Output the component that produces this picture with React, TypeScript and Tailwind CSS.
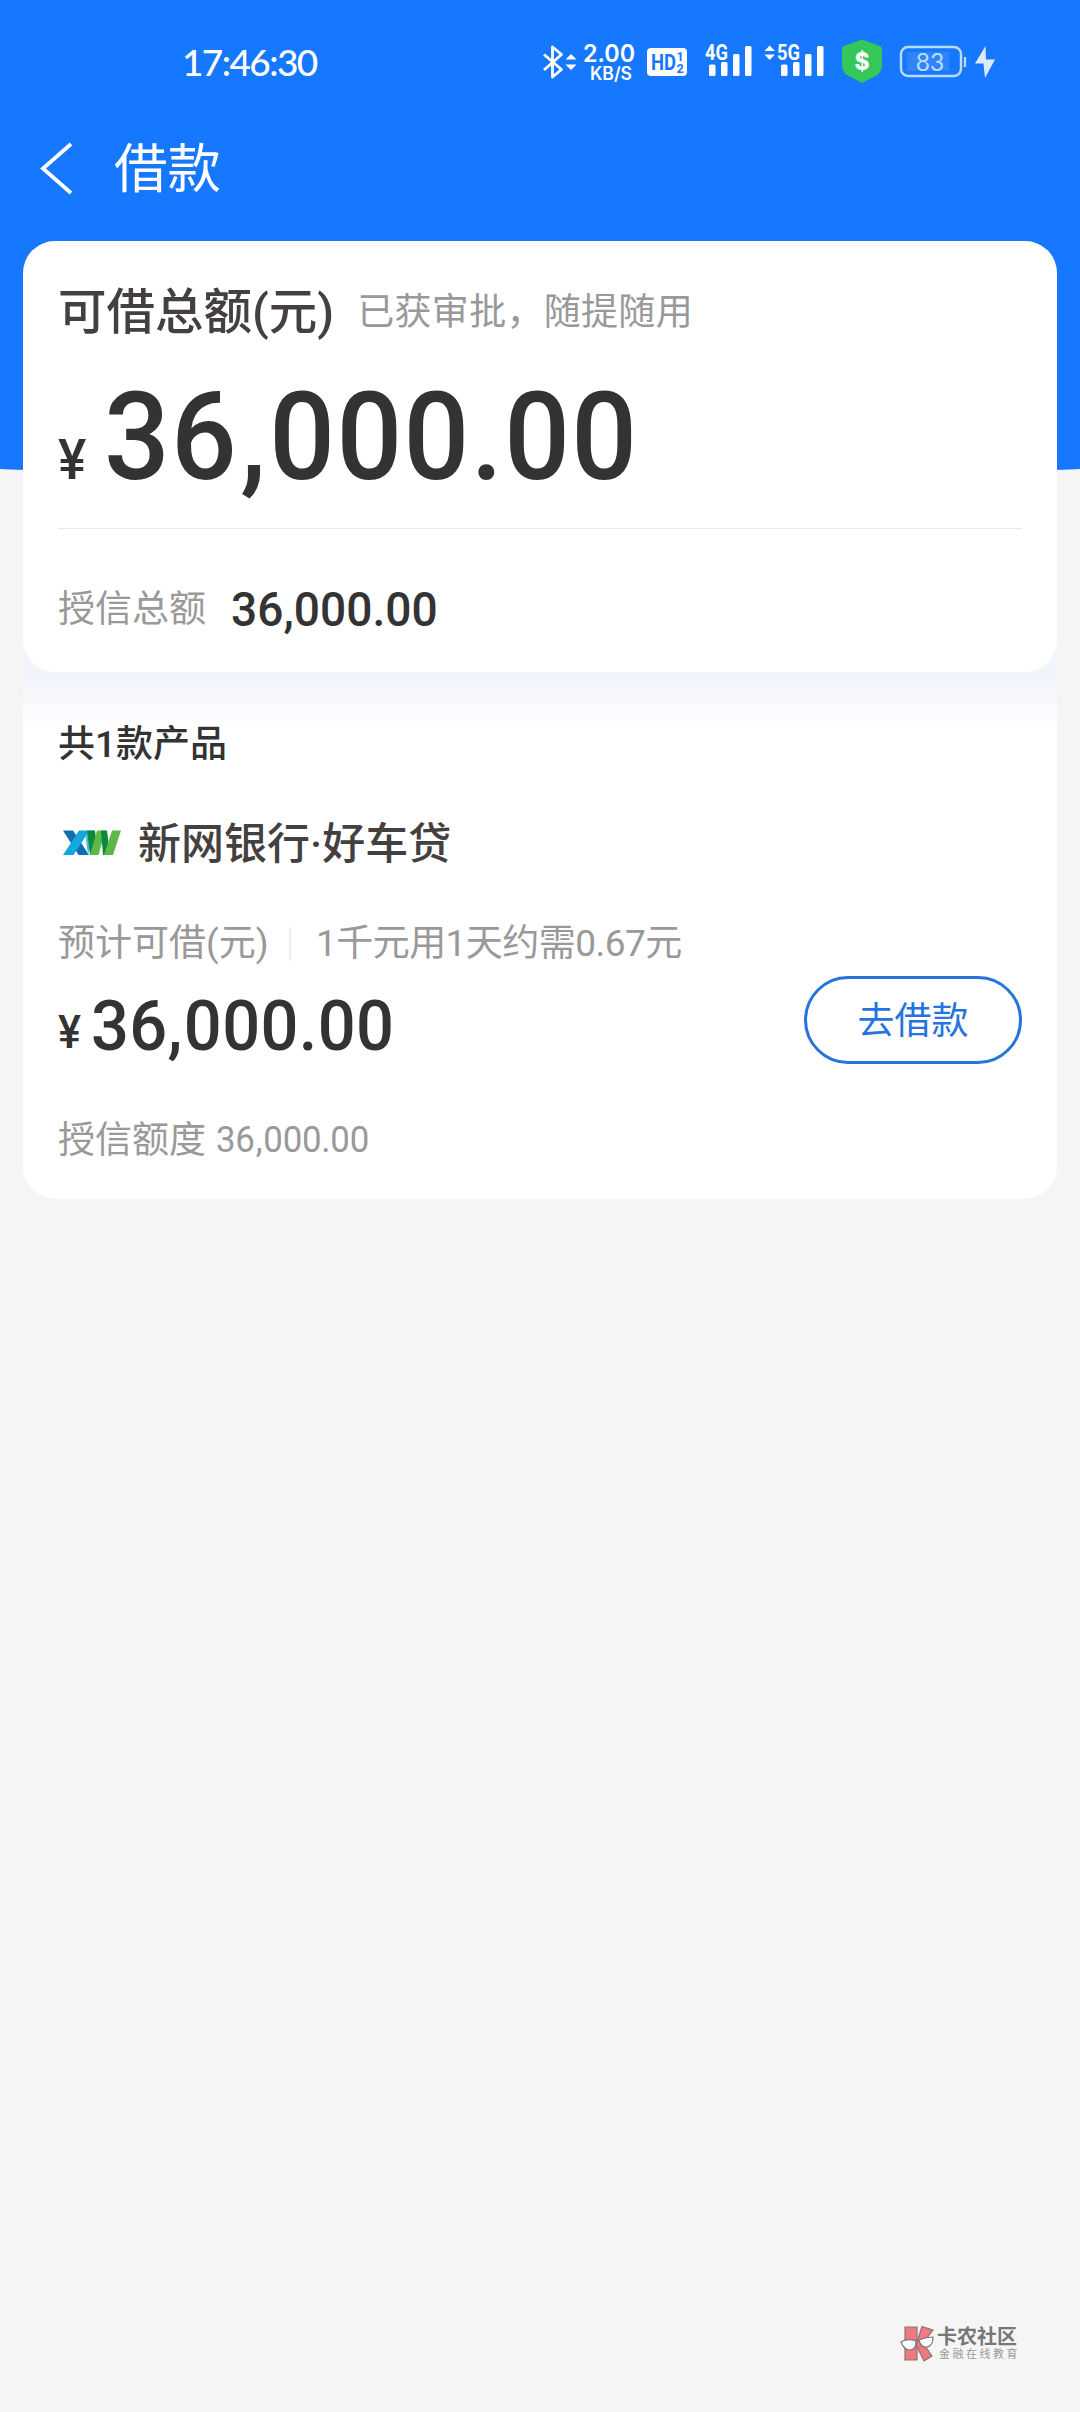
import React from "react";

const CJK = "font-['Roboto','Noto_Sans_CJK_SC',sans-serif]";

function Digits({ text, className, comma }: { text: string; className: string; comma: string }) {
  const [head, tail] = text.split(",");
  return (
    <span className={`inline-block origin-left scale-x-[0.94] whitespace-nowrap ${className}`}>
      {head}
      <span className={comma}>,</span>
      {tail}
    </span>
  );
}

function Signal({ label, arrows }: { label: string; arrows?: boolean }) {
  return (
    <svg className="shrink-0" width={62} height={48} viewBox="0 0.5 62 48" fill="#fff">
      {arrows && <path d="M1.500 13.500 6.700 8l5.200 5.500zM1.500 17 6.700 22.500 11.900 17z" />}
      <text x={14} y={22.500} fontFamily="Roboto" fontWeight={700} fontSize={21.500} textLength={23} lengthAdjust="spacingAndGlyphs">
        {label}
      </text>
      <rect x={18} y={27} width={6.500} height={11.500} rx={1.500} />
      <rect x={30} y={24.500} width={6.500} height={14} rx={1.500} />
      <rect x={42} y={16.500} width={6.500} height={22} rx={1.500} />
      <rect x={54} y={8.500} width={6.500} height={30} rx={1.500} />
    </svg>
  );
}

function StatusBar() {
  return (
    <div className="flex h-[124px] shrink-0 items-center text-white">
      <span className="mb-[2px] ml-[182px] w-[359px] font-['Lato',sans-serif] text-[37px] leading-none font-medium tracking-[-1.6px]">17:46:30</span>
      <svg className="mb-[2px] shrink-0" width={38} height={40} viewBox="0 0 38 40" fill="none" stroke="#fff">
        <path d="M3 13.500 20.500 28.500 11.500 36V6L20.500 13.500 3 29" strokeWidth={2.800} strokeLinejoin="round" />
        <path d="M24.500 18.500 30 13l5.500 5.500zM24.500 23.500 30 29l5.500-5.500z" fill="#fff" stroke="none" />
      </svg>
      <svg className="shrink-0" width={60} height={48} viewBox="0 -2 60 48" fill="#fff" fontFamily="Inter" fontWeight={600}>
        <text x={4} y={22} fontSize={24} textLength={52} lengthAdjust="spacingAndGlyphs">2.00</text>
        <text x={11} y={39.500} fontSize={18} textLength={42} lengthAdjust="spacingAndGlyphs">KB/S</text>
      </svg>
      <svg className="ml-[8px] shrink-0" width={40} height={28} viewBox="0 0 40 28">
        <rect width={40} height={28} rx={4} fill="#fff" />
        <g fill="#1677ff" fontFamily="Roboto" fontWeight={700}>
          <text x={4} y={21.500} fontSize={21.500} textLength={25} lengthAdjust="spacingAndGlyphs">HD</text>
          <text x={29.500} y={13} fontSize={12.500}>1</text>
          <text x={29.500} y={25} fontSize={12.500}>2</text>
        </g>
      </svg>
      <div className="ml-[4px] flex">
        <Signal label="4G" />
        <div className="ml-[10px] flex">
          <Signal label="5G" arrows />
        </div>
      </div>
      <svg className="mb-[3px] ml-[17px] shrink-0" width={40} height={44} viewBox="0 0 40 44">
        <path d="M20 .5 38 7q2 .7 2 3v16q0 7-5.500 10.500L20 44 5.500 36.500Q0 33 0 26V10q0-2.300 2-3z" fill="#34c759" />
        <text x={20} y={30.500} fontFamily="Inter" fontWeight={800} fontSize={24} fill="#fff" textAnchor="middle" textLength={15} lengthAdjust="spacingAndGlyphs">$</text>
      </svg>
      <svg className="ml-[17px] shrink-0" width={98} height={34} viewBox="0 0 98 34" fill="none">
        <rect x={2} y={2} width={60} height={29} rx={7} stroke="#b9dcff" strokeWidth={2.400} />
        <rect x={8} y={7} width={42} height={19} fill="#3083ff" />
        <path d="M66 12v10" stroke="#b9dcff" strokeWidth={2.200} />
        <text x={31} y={25.500} fontFamily="Lato" fontSize={24.500} fill="#b9dcff" textAnchor="middle">83</text>
        <path d="M86.500 1 76 18.500h8.500L86 33l10-18.500h-9z" fill="#dcebff" />
      </svg>
    </div>
  );
}

function BankLogo() {
  return (
    <svg className="shrink-0" width={58} height={26} viewBox="0 0 58 26">
      <path d="M0 .5h10L26 25H15.500z" fill="#0f6fae" />
      <path d="M16 .5h10.500L10.500 25H0z" fill="#14a7df" />
      <path d="M22.500 6 27 .5h4L25 25z" fill="#41c0ec" />
      <path d="M24 .5h8L35 25h-8z" fill="#0b8a3a" />
      <path d="M34 .5h8.500L35.500 25H27z" fill="#5cb947" />
      <path d="M38 .5h6L47 25h-7z" fill="#0b8a3a" />
      <path d="M49 .5h9L50 25h-9z" fill="#5cb947" />
    </svg>
  );
}

function Watermark() {
  return (
    <div className="mt-auto mb-[49px] ml-[900px] flex h-[38px] items-start">
      <svg className="shrink-0" width={36} height={38} viewBox="0 0 36 38">
        <g fill="#ee7a80" stroke="#8d7275" strokeWidth={1.200}>
          <path d="M5 2h12v33H5z" />
          <path d="M22 1.500 33 5 23 18l9 13-8 5-8-16z" />
        </g>
        <g fill="#fff" stroke="#777" strokeWidth={1.200}>
          <path d="M1 17q7-4 15-1 0 9-6 9T1 17z" />
          <path d="M19 15q7-3 14-3 0 9-6 10t-8-7z" />
        </g>
      </svg>
      <div className="ml-[1px] flex flex-col">
        <span className="h-[22px] text-[20px] leading-[24px] font-bold text-[#777]">卡农社区</span>
        <span className="pl-[2px] text-[11px] leading-[16px] tracking-[2.500px] whitespace-nowrap text-[#999]">金融在线教育</span>
      </div>
    </div>
  );
}

export default function App() {
  return (
    <div className={`relative flex h-[2412px] w-[1080px] flex-col overflow-hidden bg-[#f5f5f5] ${CJK}`}>
      <div className="absolute top-0 -left-[60px] h-[477px] w-[1200px] rounded-b-[50%_14px] bg-[#1677ff]" />
      <div className="relative flex grow flex-col">
        <StatusBar />
        <header className="flex h-[117px] shrink-0 items-start text-white">
          <svg className="mt-[18px] ml-[40px] shrink-0" width={34} height={54} viewBox="0 0 34 54" fill="none" stroke="#fff" strokeWidth={3.800}>
            <path d="M31 2 3 26.500 31 51" />
          </svg>
          <h1 className="mt-[10px] ml-[40px] text-[53.500px] leading-[72px]">借款</h1>
        </header>

        <div className="mx-[23px] flex h-[463px] shrink-0 flex-col bg-linear-to-b from-transparent from-82% via-[#f1f4fa] via-93% to-[#f7f8fb] to-100%">
          <section className="flex h-[431px] shrink-0 flex-col rounded-[32px] bg-white px-[35px]">
            <div className="mt-[37px] flex h-[70px] items-center">
              <span className="text-[48.500px] leading-[70px] font-medium whitespace-nowrap text-[#444040]">可借总额(元)</span>
              <span className="ml-[23px] text-[37px] leading-[70px] tracking-[0.300px] whitespace-nowrap text-[#999]">已获审批，随提随用</span>
            </div>
            <div className="flex h-[181px] items-baseline border-b border-[#e8e8e8] text-[#333]">
              <span className="w-[46px] origin-left scale-x-[0.95] text-[56px] leading-[181px] font-medium">¥</span>
              <Digits text="36,000.00" className="text-[123px] leading-[178px] font-medium tracking-[1.500px]" comma="ml-[2px] mr-[2px]" />
            </div>
            <div className="mt-[41px] flex h-[80px] items-baseline">
              <span className="relative -top-[4px] w-[173px] text-[37px] leading-[80px] text-[#999]">授信总额</span>
              <Digits text="36,000.00" className="text-[49px] leading-[80px] font-medium tracking-[0.050px] text-[#333]" comma="" />
            </div>
          </section>
        </div>

        <section className="mx-[23px] flex h-[495px] shrink-0 flex-col rounded-b-[32px] bg-linear-to-b from-[#f9fafd] to-white to-[24px] px-[35px]">
          <h2 className="mt-[14px] text-[37px] leading-[54px] font-medium text-[#333]">共1款产品</h2>
          <div className="mt-[39px] flex h-[64px] items-center">
            <div className="ml-[5px] flex w-[75px]">
              <BankLogo />
            </div>
            <span className="mt-[2px] text-[43px] leading-[64px] font-medium text-[#444040]">新网银行·好车贷</span>
          </div>
          <div className="mt-[41px] flex h-[56px] items-center text-[37px] leading-[56px] text-[#999]">
            <span className="w-[231px] whitespace-nowrap">预计可借(元)</span>
            <span className="h-[34px] w-[2px] bg-[#eee]" />
            <span className="ml-[25px] tracking-[-0.550px] whitespace-nowrap">1千元用1天约需0.67元</span>
          </div>
          <div className="flex h-[92px] justify-between">
            <div className="flex items-baseline text-[#333]">
              <span className="relative -top-[2px] w-[33px] origin-left scale-x-[0.92] text-[47px] leading-[100px] font-medium">¥</span>
              <Digits text="36,000.00" className="text-[71px] leading-[108px] font-medium tracking-[0.400px]" comma="mr-[1px]" />
            </div>
            <button className="mt-[4px] h-[88px] w-[218px] rounded-full border-[3px] border-[#2573dd] pt-[4px] text-[37px] leading-[78px] text-[#2573dd]">去借款</button>
          </div>
          <div className="mt-[49px] flex items-center text-[37px] leading-[56px] text-[#999]">
            <span className="w-[158px]">授信额度</span>
            <Digits text="36,000.00" className="-mt-[2px] tracking-[-0.200px]" comma="mx-[1px]" />
          </div>
        </section>

        <Watermark />
      </div>
    </div>
  );
}
